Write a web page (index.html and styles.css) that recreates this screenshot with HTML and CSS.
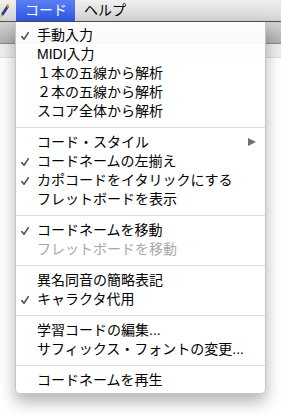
FILE: index.html
```html
<!DOCTYPE html>
<html lang="ja">
<head>
  <meta charset="UTF-8">
  <title>コード メニュー</title>
  <link rel="stylesheet" href="styles.css">
</head>
<body>
  <div class="menubar">
    <svg class="app-icon" width="9" height="16" viewBox="0 0 9 16">
      <path d="M7 2 L9 4 L3 13 L1 11 Z" fill="#2a3f8c"/>
      <path d="M6 2 L8.5 1 L9 4 L7.5 5 Z" fill="#f08a1c"/>
      <path d="M1 11 L3 13 L0 15 Z" fill="#e8c040"/>
    </svg>
    <span class="bar-item active">コード</span>
    <span class="bar-item">ヘルプ</span>
  </div>
  <div class="toolbar"></div>
  <div class="subbar"></div>

  <div class="menu">
    <div class="item checked">手動入力</div>
    <div class="item">MIDI入力</div>
    <div class="item">１本の五線から解析</div>
    <div class="item">２本の五線から解析</div>
    <div class="item">スコア全体から解析</div>
    <div class="sep"></div>
    <div class="item submenu">コード・スタイル</div>
    <div class="item checked">コードネームの左揃え</div>
    <div class="item checked">カポコードをイタリックにする</div>
    <div class="item">フレットボードを表示</div>
    <div class="sep"></div>
    <div class="item checked">コードネームを移動</div>
    <div class="item disabled">フレットボードを移動</div>
    <div class="sep"></div>
    <div class="item">異名同音の簡略表記</div>
    <div class="item checked">キャラクタ代用</div>
    <div class="sep"></div>
    <div class="item">学習コードの編集...</div>
    <div class="item">サフィックス・フォントの変更...</div>
    <div class="sep"></div>
    <div class="item">コードネームを再生</div>
  </div>
</body>
</html>
```

FILE: styles.css
```css
html, body {
  margin: 0;
  padding: 0;
}
body {
  width: 281px;
  height: 414px;
  overflow: hidden;
  position: relative;
  background-color: #fff;
  font-family: "Liberation Sans", "Noto Sans CJK JP", sans-serif;
  font-size: 14px;
  color: #000;
}
.menubar {
  height: 21px;
  display: flex;
  align-items: center;
  background: linear-gradient(#f0f0f0, #d2d2d2);
  border-bottom: 1px solid #505050;
}
.app-icon {
  width: 9px;
  height: 16px;
  margin-right: 7px;
  flex: none;
}
.bar-item {
  height: 21px;
  line-height: 21px;
  padding: 0 8px 0 9px;
}
.bar-item.active {
  color: #fff;
  background: linear-gradient(#5a7ff2, #2d57e6);
  width: 42px;
}
.toolbar {
  height: 21px;
  background: linear-gradient(#d2d2d2, #b0b0b0);
  border-bottom: 1px solid #8c8c8c;
}
.subbar {
  height: 13px;
  background-color: #ededed;
  border-bottom: 1px solid #dcdcdc;
}
.menu {
  position: absolute;
  left: 15px;
  top: 22px;
  width: 249px;
  padding: 4px 0 3px;
  background-color: rgba(255, 255, 255, 0.93);
  border-left: 1px solid #c4c4c4;
  border-right: 1px solid #c4c4c4;
  border-bottom: 1px solid #c4c4c4;
  border-radius: 0 0 5px 5px;
  box-shadow: 0 8px 16px rgba(0, 0, 0, 0.3);
}
.item {
  position: relative;
  height: 19px;
  line-height: 19px;
  padding-left: 21px;
  white-space: nowrap;
}
.item.checked::before {
  content: "";
  position: absolute;
  left: 5px;
  top: 6px;
  width: 8px;
  height: 8px;
  background: url("data:image/svg+xml,%3Csvg xmlns='http://www.w3.org/2000/svg' width='8' height='8' viewBox='0 0 8 8'%3E%3Cpath d='M0.8 4.6 L3 7.2 L7.4 0.6' fill='none' stroke='%23595959' stroke-width='1.7' stroke-linecap='round' stroke-linejoin='round'/%3E%3C/svg%3E") no-repeat;
}
.item.submenu::after {
  content: "";
  position: absolute;
  right: 9px;
  top: 5px;
  border-top: 4.5px solid transparent;
  border-bottom: 4.5px solid transparent;
  border-left: 8px solid #707070;
}
.item.disabled {
  color: #a8a8a8;
}
.sep {
  height: 1px;
  margin: 6px 0 5px;
  background-color: #dedede;
}
```
